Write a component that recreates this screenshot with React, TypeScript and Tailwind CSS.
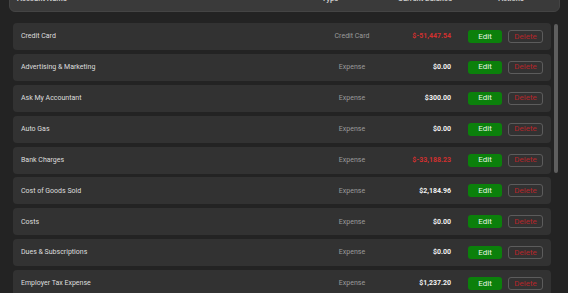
import React from 'react'

const accounts = [
  { name: 'Credit Card', type: 'Credit Card', balance: '$-51,447.54', negative: true },
  { name: 'Advertising & Marketing', type: 'Expense', balance: '$0.00' },
  { name: 'Ask My Accountant', type: 'Expense', balance: '$300.00' },
  { name: 'Auto Gas', type: 'Expense', balance: '$0.00' },
  { name: 'Bank Charges', type: 'Expense', balance: '$-33,188.23', negative: true },
  { name: 'Cost of Goods Sold', type: 'Expense', balance: '$2,184.96' },
  { name: 'Costs', type: 'Expense', balance: '$0.00' },
  { name: 'Dues & Subscriptions', type: 'Expense', balance: '$0.00' },
  { name: 'Employer Tax Expense', type: 'Expense', balance: '$1,237.20' },
]

export default function App() {
  return (
    <div className="h-[293px] w-[568px] overflow-hidden bg-[#232323] font-['Roboto',sans-serif]">
      {/* table header, mostly scrolled off */}
      <div className="mx-[9px] -mt-[28px] flex h-[40px] w-[551px] items-end rounded-md border border-[#444] bg-[#3a3a3a] pb-[7px] text-[7.5px] font-semibold text-[#cfcfcf]">
        <div className="flex-1 pl-[7px]">Account Name</div>
        <div className="w-[60px] text-center">Type</div>
        <div className="w-[130px] text-center">Current Balance</div>
        <div className="w-[42px] text-center">Actions</div>
        <div className="w-[27px]" />
      </div>

      <div className="mt-[11px] ml-[13px] flex">
        <div className="flex w-[538px] flex-col gap-[3.9px]">
          {accounts.map((a) => (
            <div key={a.name} className="flex h-[27px] items-center rounded-[4px] bg-[#323232] pl-[8px] pr-[8px]">
              <div className="flex-1 text-[7px] text-[#dedede]">{a.name}</div>
              <div className="w-[100px] text-center text-[7px] text-[#9a9a9a]">{a.type}</div>
              <div className={`w-[49px] text-right text-[7px] font-bold ${a.negative ? 'text-[#d0302f]' : 'text-[#f2f2f2]'}`}>
                {a.balance}
              </div>
              <button className="ml-[17px] flex h-[13px] w-[34px] items-center justify-center rounded-[3px] bg-[#0b800b] text-[8px] text-[#e8f5e8]">
                Edit
              </button>
              <button className="ml-[6px] flex h-[13px] w-[35px] items-center justify-center rounded-[3px] border border-[#5c5c5c] text-[8px] text-[#b5262a]">
                Delete
              </button>
            </div>
          ))}
        </div>
        <div className="ml-[3px] w-[4px] pt-[1px]">
          <div className="h-[149px] w-[4px] rounded-full bg-[#5e5e5e]" />
        </div>
      </div>
    </div>
  )
}
